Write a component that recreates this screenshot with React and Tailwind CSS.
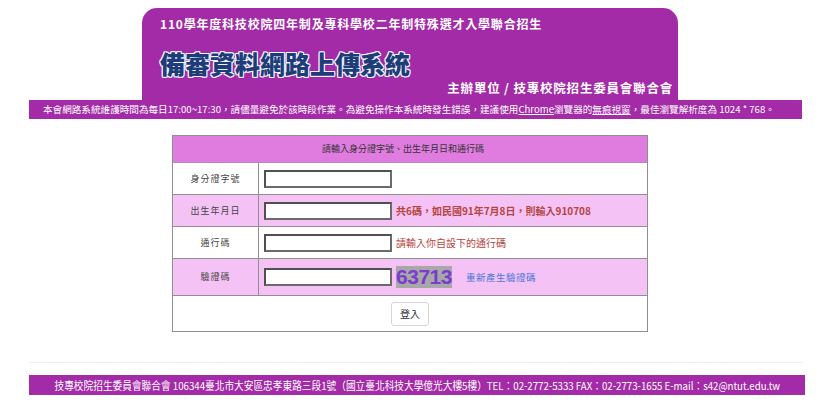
import React from 'react'

const purple = 'bg-[#a32ba7]'

function Row({ label, pink, tall, children }) {
  return (
    <div className={`flex border-b border-[#8f8f8f] ${pink ? 'bg-[#f4c2f4]' : 'bg-white'} ${tall ? 'h-[37px]' : 'h-[32px]'}`}>
      <div className="w-[86px] flex-shrink-0 border-r border-[#8f8f8f] flex items-center justify-center text-[9px] tracking-[1px] text-[#444]">
        {label}
      </div>
      <div className="flex-1 flex items-center pl-[5px]">{children}</div>
    </div>
  )
}

function Field() {
  return <input type="text" className="w-[128px] h-[18px] bg-white border-2 border-[#505050] border-b-[#6a6a6a] border-r-[#6a6a6a] outline-none" />
}

export default function App() {
  return (
    <div className="w-[832px] h-[408px] bg-white overflow-hidden font-['Noto_Sans_CJK_TC','Noto_Sans',sans-serif]">
      {/* Banner */}
      <div className="pt-[8px]">
        <div className={`ml-[142px] w-[536px] h-[92px] rounded-t-[15px] ${purple} pl-[18px] pr-[5px] pt-[9px] flex flex-col`}>
          <p className="text-white font-bold text-[12px] leading-[14px] tracking-[0.8px]">110學年度科技校院四年制及專科學校二年制特殊選才入學聯合招生</p>
          <h1 className="mt-[17px] text-[#1d3c78] font-black text-[25px] leading-[30px] [text-shadow:1px_1px_0_#eef3ff,-1px_-1px_0_#eef3ff,1px_-1px_0_#eef3ff,-1px_1px_0_#eef3ff,0_1px_0_#eef3ff,1px_0_0_#eef3ff,0_-1px_0_#eef3ff,-1px_0_0_#eef3ff]">
            備審資料網路上傳系統
          </h1>
          <p className="mt-[3px] text-right text-white font-bold text-[12.5px] leading-[14px] tracking-[0.8px] whitespace-pre">主辦單位 / 技專校院招生委員會聯合會</p>
        </div>
        <div className={`ml-[29px] w-[773px] h-[19px] ${purple} text-white text-[9.6px] pl-[14px] flex items-center whitespace-nowrap`}>
          本會網路系統維護時間為每日17:00~17:30，請儘量避免於該時段作業。為避免操作本系統時發生錯誤，建議使用<span className="underline">Chrome</span>瀏覽器的<span className="underline">無痕視窗</span>，最佳瀏覽解析度為 1024 * 768。
        </div>
      </div>

      {/* Login form */}
      <div className="mt-[16px] ml-[172px] w-[476px] border border-[#8f8f8f] border-b-0">
        <div className="h-[27px] bg-[#e07ce0] border-b border-[#b98ab9] flex items-center justify-center pr-[14px] text-[9px] text-[#333]">
          請輸入身分證字號、出生年月日和通行碼
        </div>
        <Row label="身分證字號"><Field /></Row>
        <Row label="出生年月日" pink>
          <Field />
          <span className="ml-[4px] text-[10px] font-bold text-[#b5453f]">共6碼，如民國91年7月8日，則輸入910708</span>
        </Row>
        <Row label="通行碼">
          <Field />
          <span className="ml-[4px] text-[10px] text-[#b5453f]">請輸入你自設下的通行碼</span>
        </Row>
        <Row label="驗證碼" pink tall>
          <Field />
          <span className="ml-[4px] w-[56px] h-[22px] bg-[#a8a8a8] flex items-center justify-center font-['Liberation_Sans',sans-serif] font-bold text-[21px] text-[#7b3ccf] tracking-[-0.5px]">63713</span>
          <span className="ml-[14px] text-[9.5px] tracking-[0.5px] text-[#4a78d8]">重新產生驗證碼</span>
        </Row>
        <div className="h-[36px] bg-white border-b border-[#8f8f8f] flex items-center justify-center">
          <button className="w-[38px] h-[24px] bg-white border border-[#d6d6d6] rounded-[3px] text-[10px] text-[#333]">登入</button>
        </div>
      </div>

      {/* Footer */}
      <div className="mt-[30px] ml-[29px] w-[774px] border-t border-[#eeeeee]" />
      <div className={`mt-[12px] ml-[29px] w-[776px] h-[20px] ${purple} flex items-center justify-center overflow-hidden`}>
        <span className="inline-block whitespace-nowrap text-white text-[11px] scale-x-[0.88]">
          技專校院招生委員會聯合會 106344臺北市大安區忠孝東路三段1號（國立臺北科技大學億光大樓5樓）TEL：02-2772-5333 FAX：02-2773-1655 E-mail：s42@ntut.edu.tw
        </span>
      </div>
    </div>
  )
}
